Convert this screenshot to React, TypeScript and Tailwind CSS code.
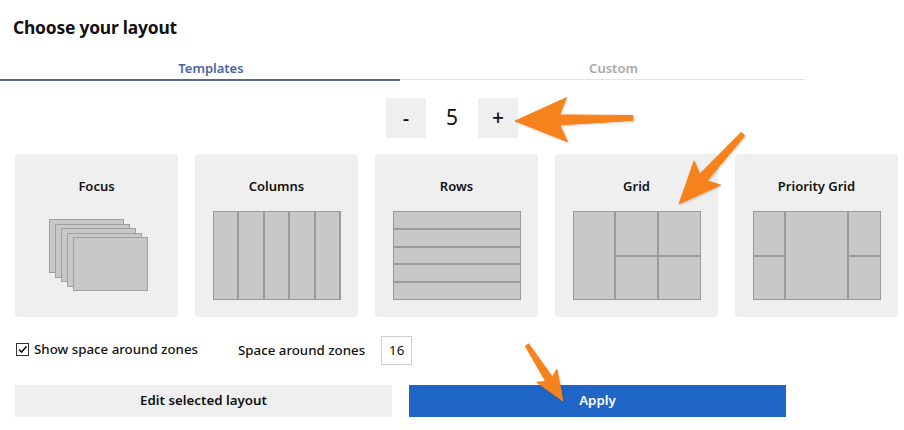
import React from "react";

type Pt = [number, number];

// builds a tapered annotation arrow polygon from tail to tip
function arrowPoints(tail: Pt, tip: Pt, headLen: number, headHalf: number, tailHalf: number, neckHalf: number) {
  const dx = tip[0] - tail[0];
  const dy = tip[1] - tail[1];
  const len = Math.hypot(dx, dy);
  const ux = dx / len;
  const uy = dy / len;
  const nx = -uy;
  const ny = ux;
  const at = (d: number, off: number): Pt => [tip[0] - ux * d + nx * off, tip[1] - uy * d + ny * off];
  const pts: Pt[] = [
    tip,
    at(headLen, headHalf),
    at(headLen * 0.86, neckHalf),
    [tail[0] + nx * tailHalf, tail[1] + ny * tailHalf],
    [tail[0] - nx * tailHalf, tail[1] - ny * tailHalf],
    at(headLen * 0.86, -neckHalf),
    at(headLen, -headHalf),
  ];
  return pts.map((p) => `${p[0].toFixed(1)},${p[1].toFixed(1)}`).join(" ");
}

const Zone = ({ className = "" }: { className?: string }) => (
  <div className={`bg-[#c8c8c8] ${className}`} />
);

const FocusDiagram = () => (
  <div className="relative w-[128px] h-[89px]">
    {[0, 1, 2, 3, 4].map((i) => (
      <div
        key={i}
        className="absolute w-[75px] h-[54px] bg-[#c8c8c8] border border-[#a0a0a0]"
        style={{ left: 16 + i * 6.2, top: 8 + i * 4.5 }}
      />
    ))}
  </div>
);

const ColumnsDiagram = () => (
  <div className="w-[128px] h-[89px] border border-[#9a9a9a] bg-[#9a9a9a] flex gap-[2px]">
    {[0, 1, 2, 3, 4].map((i) => (
      <Zone key={i} className="flex-1" />
    ))}
  </div>
);

const RowsDiagram = () => (
  <div className="w-[128px] h-[89px] border border-[#9a9a9a] bg-[#9a9a9a] flex flex-col gap-[2px]">
    {[0, 1, 2, 3, 4].map((i) => (
      <Zone key={i} className="flex-1" />
    ))}
  </div>
);

const GridDiagram = () => (
  <div className="w-[128px] h-[89px] border border-[#9a9a9a] bg-[#9a9a9a] grid grid-cols-3 grid-rows-2 gap-[2px]">
    <Zone className="row-span-2" />
    <Zone />
    <Zone />
    <Zone />
    <Zone />
  </div>
);

const PriorityDiagram = () => (
  <div className="w-[128px] h-[89px] border border-[#9a9a9a] bg-[#9a9a9a] grid grid-cols-[1fr_2fr_1fr] grid-rows-2 gap-[2px]">
    <Zone />
    <Zone className="row-span-2" />
    <Zone />
    <Zone />
    <Zone />
  </div>
);

const layouts = [
  { name: "Focus", diagram: <FocusDiagram /> },
  { name: "Columns", diagram: <ColumnsDiagram /> },
  { name: "Rows", diagram: <RowsDiagram /> },
  { name: "Grid", diagram: <GridDiagram /> },
  { name: "Priority Grid", diagram: <PriorityDiagram /> },
];

export default function App() {
  return (
    <div
      className="relative w-[904px] h-[430px] bg-white overflow-hidden text-[#111]"
      style={{ fontFamily: '"Noto Sans", "Open Sans", sans-serif' }}
    >
      {/* Title */}
      <h1 className="pl-[13px] pt-[14px] h-[40px] text-[17.4px] leading-[26px] font-bold tracking-[-0.2px]">
        Choose your layout
      </h1>

      {/* Tabs */}
      <div className="flex w-[805px] mt-[17px]">
        <div className="w-[400px] h-[24px] pl-[22px] border-b-2 border-[#4f6b92] text-center text-[13px] leading-[23px] font-semibold text-[#4766a0]">
          Templates
        </div>
        <div className="w-[405px] h-[23px] pl-[22px] border-b border-[#e3e3e3] text-center text-[13px] leading-[23px] font-semibold text-[#a8a8a8]">
          Custom
        </div>
      </div>

      {/* Counter */}
      <div className="flex justify-center items-center mt-[17px] h-[40px]">
        <div className="w-[40px] h-[40px] bg-[#efefef] flex items-center justify-center text-[20px] font-medium">
          -
        </div>
        <div className="w-[52px] text-center text-[21px]">5</div>
        <div className="w-[40px] h-[40px] bg-[#efefef] flex items-center justify-center text-[21px] font-medium">
          +
        </div>
      </div>

      {/* Layout cards */}
      <div className="flex gap-[17px] pl-[15px] mt-[16px]">
        {layouts.map((l) => (
          <div key={l.name} className="w-[163px] h-[163px] bg-[#efefef] rounded-[4px] flex flex-col items-center">
            <div className="mt-[22px] h-[20px] text-[13px] leading-[20px] font-semibold">{l.name}</div>
            <div className="mt-[15px]">{l.diagram}</div>
          </div>
        ))}
      </div>

      {/* Spacing options */}
      <div className="flex items-center mt-[19px] h-[29px] text-[13.3px] font-medium">
        <div className="ml-[16px] -mt-[2px] w-[13px] h-[13px] border border-[#333] flex items-center justify-center">
          <svg width="11" height="11" viewBox="0 0 11 11">
            <path d="M2 5.5 L4.5 8 L9.5 2.5" fill="none" stroke="#111" strokeWidth="1.6" />
          </svg>
        </div>
        <span className="ml-[5px] -mt-[2px]">Show space around zones</span>
        <span className="ml-[40px]">Space around zones</span>
        <div className="ml-[16px] w-[31px] h-[29px] border border-[#cfcfcf] flex items-center justify-center font-normal">
          16
        </div>
      </div>

      {/* Buttons */}
      <div className="flex gap-[17px] pl-[15px] mt-[20px]">
        <div className="w-[377px] h-[32px] bg-[#efefef] flex items-center justify-center text-[13.3px] font-semibold">
          Edit selected layout
        </div>
        <div className="w-[377px] h-[32px] bg-[#1f66c8] flex items-center justify-center text-[13.3px] font-semibold text-white">
          Apply
        </div>
      </div>

      {/* Orange annotation arrows */}
      <svg className="absolute inset-0 pointer-events-none" width="904" height="430" viewBox="0 0 904 430">
        <defs>
          <filter id="sh" x="-20%" y="-20%" width="140%" height="140%">
            <feDropShadow dx="1" dy="1" stdDeviation="1.2" floodColor="#000" floodOpacity="0.18" />
          </filter>
        </defs>
        <g fill="#f5821f" stroke="#f5821f" strokeWidth="1" strokeLinejoin="round" filter="url(#sh)">
          <polygon points={arrowPoints([633, 118], [515, 121], 52, 22, 2.5, 5)} />
          <polygon points={arrowPoints([743, 134], [679, 204], 42, 18, 2.5, 5)} />
          <polygon points={arrowPoints([527, 345], [563, 401], 30, 12, 2, 4)} />
        </g>
      </svg>
    </div>
  );
}
